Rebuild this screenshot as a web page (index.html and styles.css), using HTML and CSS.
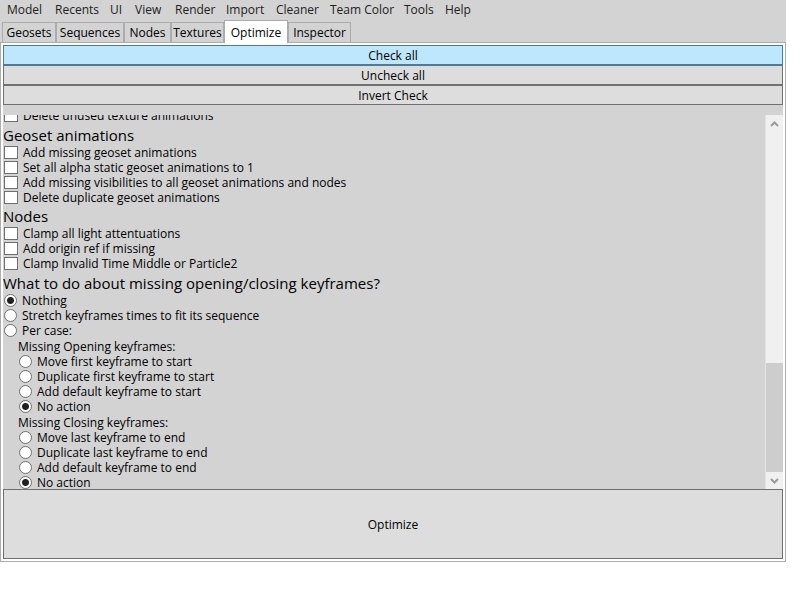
FILE: index.html
```html
<!DOCTYPE html>
<html lang="en">
<head>
<meta charset="utf-8">
<title>Model Optimizer</title>
<link rel="stylesheet" href="styles.css">
</head>
<body>
<div class="window">
  <nav class="menu">
    <button type="button">Model</button>
    <button type="button">Recents</button>
    <button type="button">UI</button>
    <button type="button">View</button>
    <button type="button">Render</button>
    <button type="button">Import</button>
    <button type="button">Cleaner</button>
    <button type="button">Team Color</button>
    <button type="button">Tools</button>
    <button type="button">Help</button>
  </nav>
  <div class="tabs" role="tablist">
    <button type="button" role="tab">Geosets</button>
    <button type="button" role="tab">Sequences</button>
    <button type="button" role="tab">Nodes</button>
    <button type="button" role="tab">Textures</button>
    <button type="button" role="tab" class="selected" aria-selected="true">Optimize</button>
    <button type="button" role="tab">Inspector</button>
  </div>
  <main class="panel">
    <div class="actions">
      <button type="button" class="btn active">Check all</button>
      <button type="button" class="btn">Uncheck all</button>
      <button type="button" class="btn">Invert Check</button>
    </div>
    <div class="scroller">
      <div class="viewport">
        <form class="options">
          <label class="row"><input type="checkbox">Delete unused texture animations</label>
          <section class="group">
            <h2>Geoset animations</h2>
            <label class="row"><input type="checkbox">Add missing geoset animations</label>
            <label class="row"><input type="checkbox">Set all alpha static geoset animations to 1</label>
            <label class="row"><input type="checkbox">Add missing visibilities to all geoset animations and nodes</label>
            <label class="row"><input type="checkbox">Delete duplicate geoset animations</label>
          </section>
          <section>
            <h2>Nodes</h2>
            <label class="row"><input type="checkbox">Clamp all light attentuations</label>
            <label class="row"><input type="checkbox">Add origin ref if missing</label>
            <label class="row"><input type="checkbox">Clamp Invalid Time Middle or Particle2</label>
          </section>
          <section class="group">
            <h2>What to do about missing opening/closing keyframes?</h2>
            <label class="row"><input type="radio" name="mode" checked>Nothing</label>
            <label class="row"><input type="radio" name="mode">Stretch keyframes times to fit its sequence</label>
            <label class="row"><input type="radio" name="mode">Per case:</label>
            <div class="cases">
              <p>Missing Opening keyframes:</p>
              <label class="row"><input type="radio" name="opening">Move first keyframe to start</label>
              <label class="row"><input type="radio" name="opening">Duplicate first keyframe to start</label>
              <label class="row"><input type="radio" name="opening">Add default keyframe to start</label>
              <label class="row"><input type="radio" name="opening" checked>No action</label>
              <p>Missing Closing keyframes:</p>
              <label class="row"><input type="radio" name="closing">Move last keyframe to end</label>
              <label class="row"><input type="radio" name="closing">Duplicate last keyframe to end</label>
              <label class="row"><input type="radio" name="closing">Add default keyframe to end</label>
              <label class="row"><input type="radio" name="closing" checked>No action</label>
            </div>
          </section>
        </form>
      </div>
      <div class="scrollbar">
        <button type="button" class="arrow" aria-label="Scroll up"><svg width="9" height="6" viewBox="0 0 9 6"><path d="M1 5 4.500 1.500 8 5"/></svg></button>
        <div class="track"><div class="thumb"></div></div>
        <button type="button" class="arrow" aria-label="Scroll down"><svg width="9" height="6" viewBox="0 0 9 6"><path d="M1 1 4.500 4.500 8 1"/></svg></button>
      </div>
    </div>
    <button type="button" class="btn optimize">Optimize</button>
  </main>
</div>
</body>
</html>
```
FILE: styles.css
```css
* {
  box-sizing: border-box;
}

body {
  margin: 0;
  background: #fff;
  color: #000;
  font: 12px/15px "Open Sans", "Noto Sans", sans-serif;
}

button {
  margin: 0;
  padding: 0;
  border: 0;
  background: none;
  color: inherit;
  font: inherit;
  white-space: nowrap;
}

.window {
  display: flex;
  flex-direction: column;
  height: calc(100vh - 38px);
  margin-right: 14px;
  background: #d3d3d3;
}

.menu {
  display: grid;
  grid-template-columns: 48px 55px 25px 40px 51px 50px 54px 74px 41px 40px;
  height: 20px;
  padding: 0 0 2px 7px;
  color: #212121;
}

.menu button {
  text-align: left;
}

.tabs {
  display: grid;
  grid-template-columns: 54px 68px 47px 53px 64px 63px;
  align-items: end;
  height: 22px;
  padding-left: 2px;
}

.tabs button {
  height: 20px;
  border: 1px solid #acacac;
  border-bottom: 0;
}

.tabs .selected {
  height: 23px;
  margin-bottom: -1px;
  background: #fff;
  z-index: 1;
}

.panel {
  flex: 1;
  display: flex;
  flex-direction: column;
  min-height: 0;
  padding: 2px;
  border: 1px solid #acacac;
  background: #d3d3d3;
  box-shadow: inset 0 0 0 2px #fff;
}

.actions {
  display: flex;
  flex-direction: column;
  margin-bottom: 10px;
}

.btn {
  height: 20px;
  border: 1px solid #707070;
  background: #ddd;
}

.btn.active {
  border-color: #3c7fb1;
  background: #bee6fd;
}

.btn.optimize {
  height: 70px;
}

.scroller {
  flex: 1;
  display: flex;
  min-height: 0;
}

.viewport {
  flex: 1;
  display: flex;
  flex-direction: column;
  justify-content: flex-end;
  overflow: hidden;
}

.options {
  margin-bottom: -1px;
}

h2 {
  margin: 0;
  padding-top: 2px;
  font-size: 15px;
  font-weight: 400;
  line-height: 19px;
}

.row {
  display: flex;
  align-items: center;
  height: 15px;
  padding-left: 1px;
}

.row input {
  appearance: none;
  flex: none;
  width: 14px;
  height: 13px;
  margin: 0 5px 0 0;
  border: 1px solid #707070;
  background: #fff;
}

.row input[type="radio"] {
  width: 13px;
  height: 13px;
  border-radius: 50%;
}

.row input[type="radio"]:checked {
  background: radial-gradient(circle, #212121 0 3px, #fff 4px);
}

.group {
  padding-top: 1px;
}

.cases {
  padding-left: 15px;
}

.cases p {
  margin: 0;
  padding-top: 1px;
}

.scrollbar {
  display: flex;
  flex-direction: column;
  width: 18px;
  border-left: 1px solid #e3e3e3;
  background: #f0f0f0;
}

.arrow {
  display: flex;
  align-items: center;
  justify-content: center;
  height: 17px;
}

.arrow path {
  fill: none;
  stroke: #9a9a9a;
  stroke-width: 2;
}

.track {
  flex: 1;
  display: flex;
  flex-direction: column;
  justify-content: flex-end;
}

.thumb {
  height: 32%;
  background: #cdcdcd;
}
```
